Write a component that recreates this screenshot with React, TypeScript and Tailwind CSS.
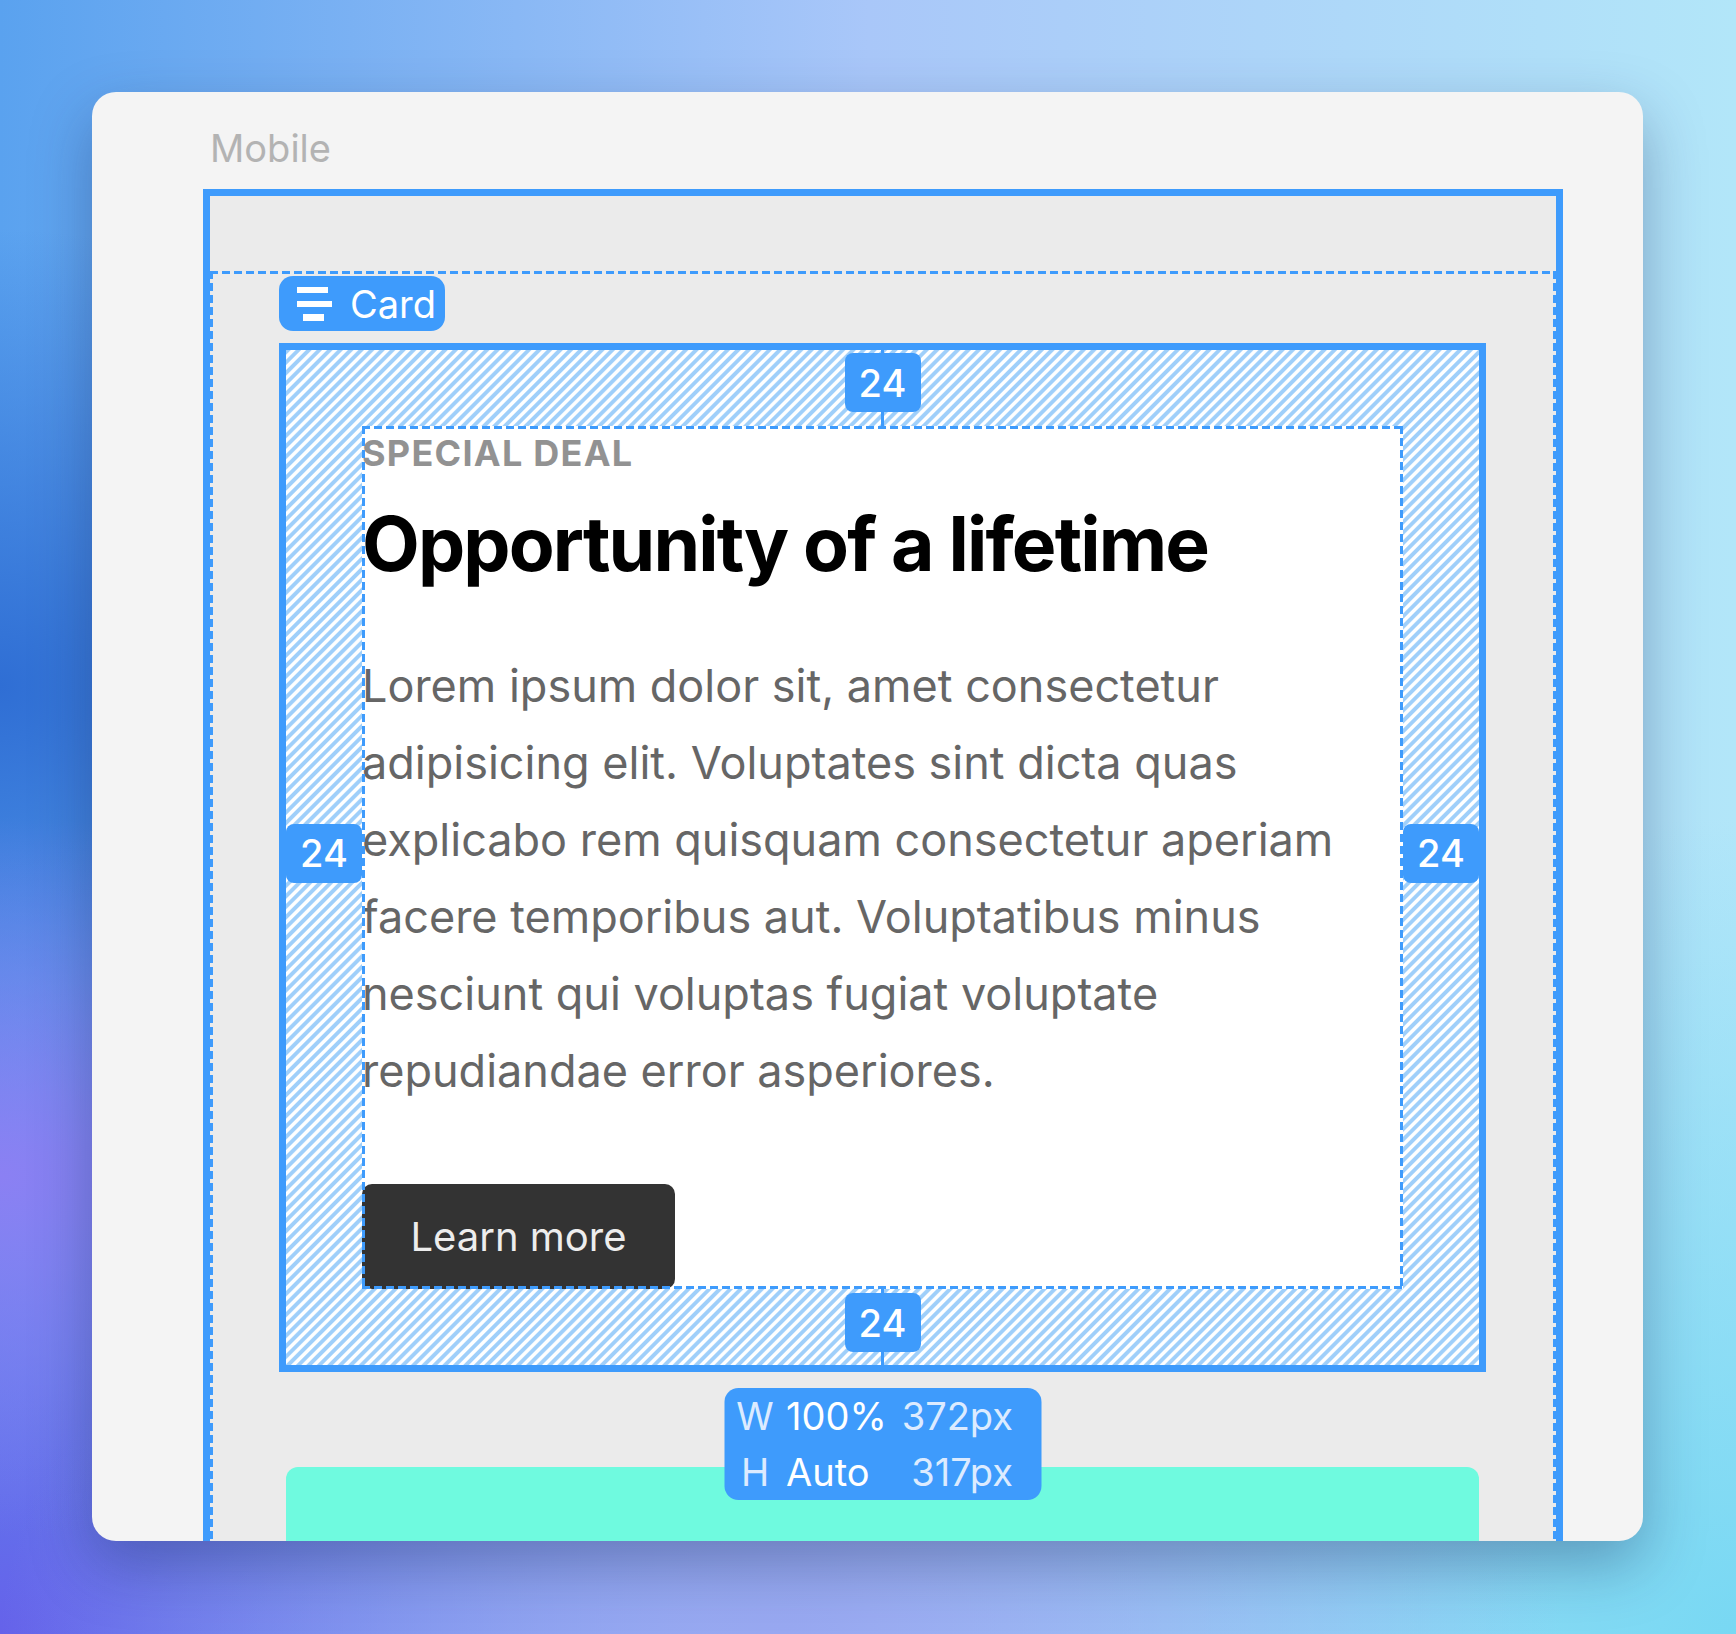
import React from "react";

function Badge({ pos }: { pos: string }) {
  return (
    <div
      className={`absolute z-10 flex h-[59px] w-[76px] items-center justify-center rounded-[8px] bg-[#3e9bfc] text-[38px] font-medium leading-none text-white ${pos}`}
    >
      24
    </div>
  );
}

function CardIcon() {
  return (
    <svg width="35" height="34" viewBox="0 0 35 34" fill="white">
      <rect x="0" y="0" width="31" height="6" />
      <rect x="0" y="14" width="35" height="6" />
      <rect x="6" y="27" width="21" height="7" />
    </svg>
  );
}

export default function App() {
  return (
    <div className="h-[1634px] w-[1736px] overflow-hidden pl-[92px] pt-[92px] [font-family:Inter,'Noto_Sans',sans-serif] [background:radial-gradient(30%_22%_at_0%_72%,#8b80f3_0%,transparent_100%),radial-gradient(30%_28%_at_0%_42%,#2f6ed4_0%,transparent_100%),radial-gradient(45%_30%_at_45%_100%,#98a8f1_0%,transparent_100%),radial-gradient(50%_50%_at_100%_100%,#78d8f3_0%,transparent_100%),radial-gradient(50%_40%_at_0%_100%,#6562ea_0%,transparent_100%),linear-gradient(90deg,#5aa2ef_0%,#a9c7f9_50%,#b2e6f9_100%)]">
      <div className="h-[1449px] w-[1551px] overflow-hidden rounded-[24px] bg-[#f4f4f4] pl-[111px] pt-[33px] shadow-[0_24px_60px_rgba(20,40,90,0.35)]">
        <div className="pl-[7px] text-[38px] leading-[47px] text-[#b3b3b3]">Mobile</div>
        <div className="mt-[17px] w-[1360px] border-[7px] border-[#3e9bfc] bg-[#ebebeb] pt-[75px]">
          <div className="bg-no-repeat pl-[69px] pt-[5px] [background-image:repeating-linear-gradient(90deg,#3e9bfc_0_8px,transparent_8px_12px),repeating-linear-gradient(180deg,#3e9bfc_0_8px,transparent_8px_12px),repeating-linear-gradient(180deg,#3e9bfc_0_8px,transparent_8px_12px)] [background-position:0_0,0_0,100%_0] [background-size:100%_3px,3px_100%,3px_100%]">
            <div className="mb-[12px] flex h-[55px] w-fit items-center gap-[18px] rounded-[14px] bg-[#3e9bfc] pl-[18px] pr-[9px] text-[38px] leading-none text-white">
              <CardIcon />
              <span>Card</span>
            </div>
            <div className="relative w-[1207px]">
              <div className="relative border-[7px] border-[#3e9bfc] bg-white p-[76px] [background-image:repeating-linear-gradient(135deg,#9fcffa_0px,#9fcffa_2.8px,#ffffff_3.9px,#ffffff_6.3px,#9fcffa_7.4px)]">
                <div className="absolute left-[calc(50%-1.5px)] top-0 h-[76px] w-[3px] bg-[#3e9bfc]" />
                <div className="absolute bottom-0 left-[calc(50%-1.5px)] h-[76px] w-[3px] bg-[#3e9bfc]" />
                <Badge pos="left-[calc(50%-38px)] top-[3px]" />
                <Badge pos="bottom-[13px] left-[calc(50%-38px)]" />
                <Badge pos="left-0 top-[calc(50%-34px)]" />
                <Badge pos="right-0 top-[calc(50%-34px)]" />
                <div className="relative bg-white">
                  <p className="text-[36px] font-bold leading-[54px] tracking-[0.035em] text-[#929292]">
                    SPECIAL DEAL
                  </p>
                  <h1 className="mt-[20px] text-[75px] font-bold leading-[88px] tracking-[-0.025em] text-black">
                    Opportunity of a lifetime
                  </h1>
                  <p className="mt-[59px] text-[45px] leading-[77px] text-[#666666]">
                    Lorem ipsum dolor sit, amet consectetur
                    <br />
                    adipisicing elit. Voluptates sint dicta quas
                    <br />
                    explicabo rem quisquam consectetur aperiam
                    <br />
                    facere temporibus aut. Voluptatibus minus
                    <br />
                    nesciunt qui voluptas fugiat voluptate
                    <br />
                    repudiandae error asperiores.
                  </p>
                  <button className="mt-[75px] flex h-[105px] w-[313px] items-center justify-center rounded-[10px] bg-[#333333] text-[40px] text-[#ededed]">
                    Learn more
                  </button>
                  <div className="pointer-events-none absolute inset-0 bg-no-repeat [background-image:repeating-linear-gradient(90deg,#3e9bfc_0_8px,transparent_8px_12px),repeating-linear-gradient(90deg,#3e9bfc_0_8px,transparent_8px_12px),repeating-linear-gradient(180deg,#3e9bfc_0_8px,transparent_8px_12px),repeating-linear-gradient(180deg,#3e9bfc_0_8px,transparent_8px_12px)] [background-position:0_0,0_100%,0_0,100%_0] [background-size:100%_3px,100%_3px,3px_100%,3px_100%]" />
                </div>
              </div>
              <div className="absolute left-1/2 top-[calc(100%+16px)] z-20 grid w-[317px] -translate-x-1/2 grid-cols-[62px_1fr_auto] rounded-[14px] bg-[#3e9bfc] pr-[28px] text-[38px] leading-[56px]">
                <span className="text-center text-[#dcebff]">W</span>
                <span className="text-white">100%</span>
                <span className="text-right text-[#dcebff]">372px</span>
                <span className="text-center text-[#dcebff]">H</span>
                <span className="text-white">Auto</span>
                <span className="text-right text-[#dcebff]">317px</span>
              </div>
            </div>
            <div className="mx-[7px] mt-[95px] h-[200px] w-[1193px] rounded-t-[12px] bg-[#6ffadf]" />
          </div>
        </div>
      </div>
    </div>
  );
}
